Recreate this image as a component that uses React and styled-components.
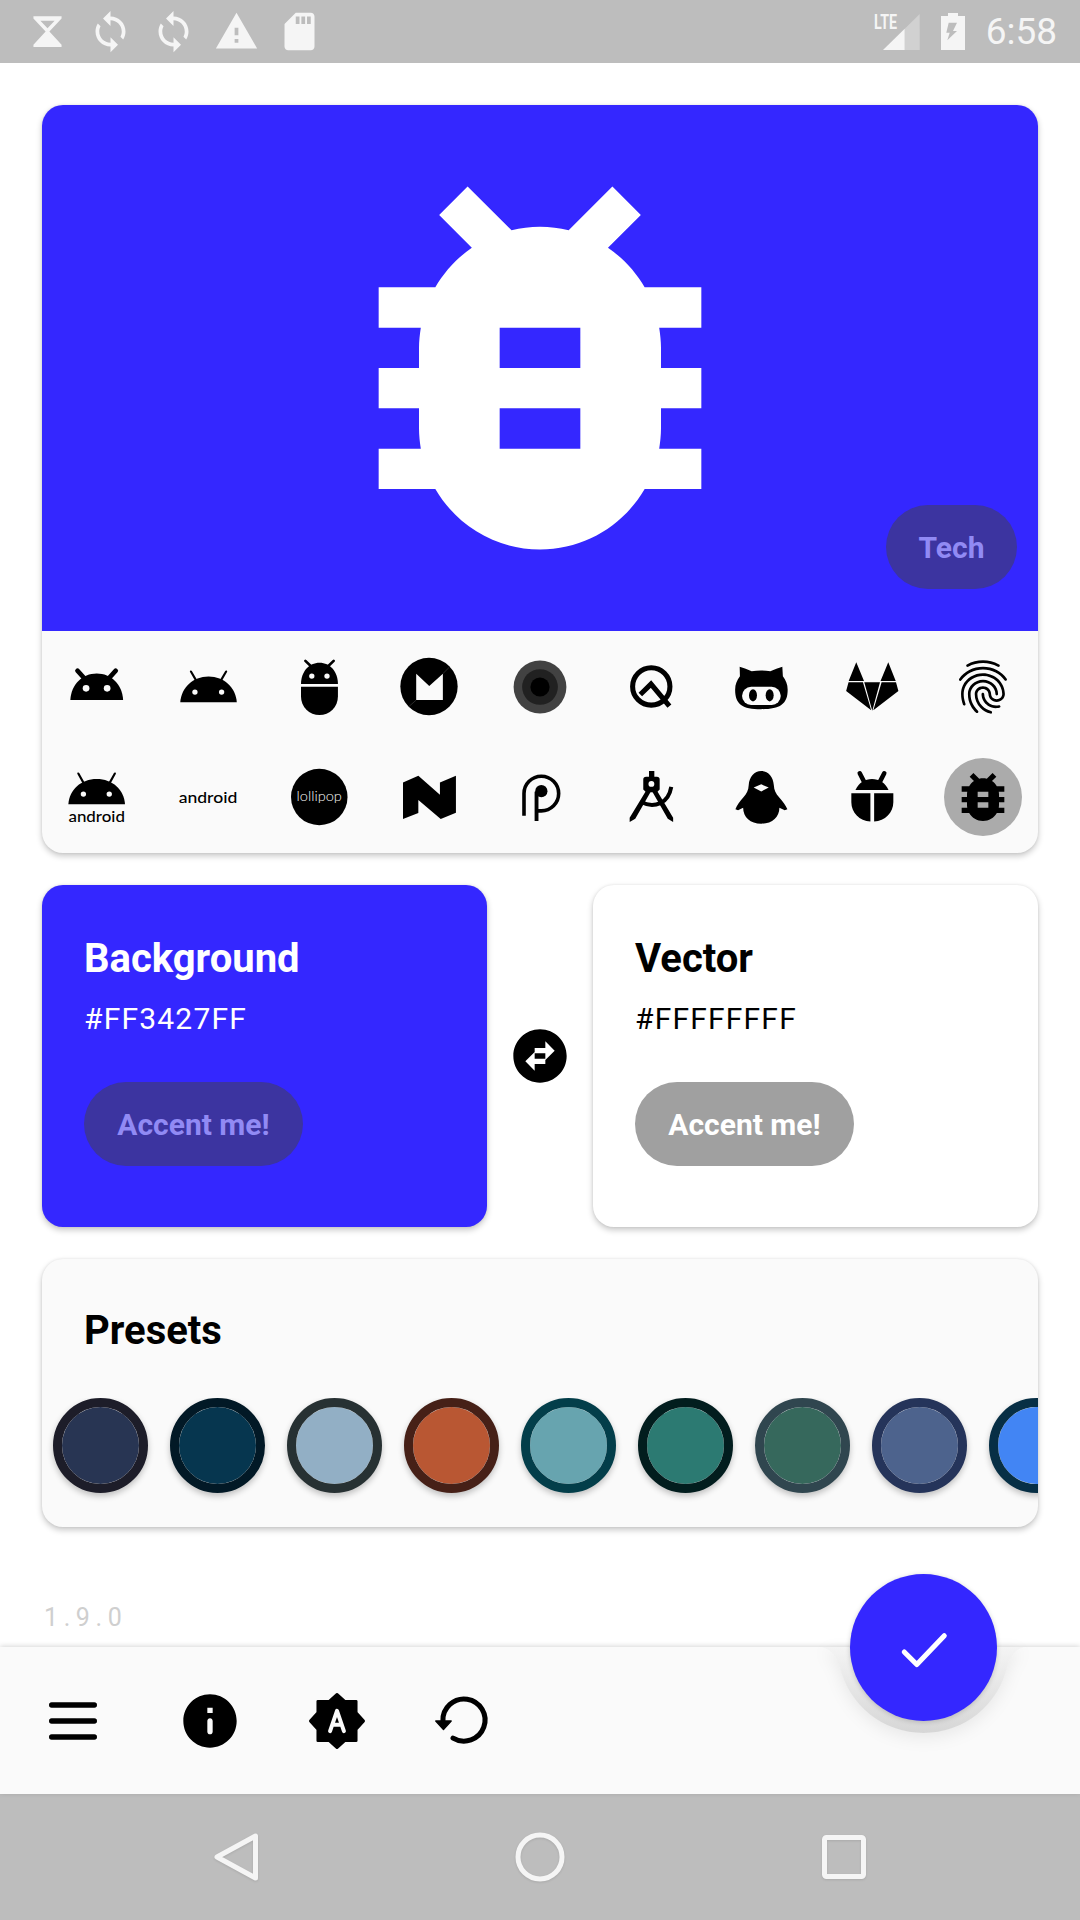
import React from 'react'
import styled, { createGlobalStyle } from 'styled-components'

const blue = '#3427FF'
const muted = '#3C34A0'
const mutedText = '#918AF4'
const tray = '#FAFAFA'
const bars = '#BDBDBD'

const GlobalStyle = createGlobalStyle`
  html, body {
    margin: 0;
    padding: 0;
    background: #fff;
  }
  body {
    font-family: Roboto, "Liberation Sans", sans-serif;
    overflow: hidden;
  }
`

const Screen = styled.div`
  width: 1080px;
  height: 1920px;
  display: flex;
  flex-direction: column;
  overflow: hidden;
`

const StatusBar = styled.div`
  flex: 0 0 63px;
  display: flex;
  align-items: center;
  padding: 0 23px 0 25px;
  background: ${bars};
  color: #f5f5f5;
`

const StatusLeft = styled.div`
  display: flex;
  gap: 18px;
`

const StatusRight = styled.div`
  display: flex;
  align-items: center;
  margin-left: auto;
`

const Clock = styled.span`
  font-size: 37px;
  margin-left: 21px;
  line-height: 63px;
`

const Content = styled.main`
  flex: 1;
  display: flex;
  flex-direction: column;
  gap: 32px;
  padding: 42px 42px 0;
`

const Card = styled.section`
  border-radius: 21px;
  background: ${(p) => p.$bg || '#fff'};
  box-shadow: 0 3px 6px rgba(0, 0, 0, 0.22), 0 0 3px rgba(0, 0, 0, 0.08);
`

const HeroCard = styled(Card)`
  overflow: hidden;
  background: ${tray};
`

const Preview = styled.div`
  position: relative;
  height: 526px;
  display: flex;
  align-items: center;
  justify-content: center;
  background: ${blue};
  color: #fff;
`

const Pill = styled.div`
  height: 84px;
  width: ${(p) => p.$width}px;
  border-radius: 42px;
  display: flex;
  align-items: center;
  justify-content: center;
  font-size: 30px;
  font-weight: 700;
  background: ${(p) => p.$bg};
  color: ${(p) => p.$fg};
`

const TechPill = styled(Pill)`
  position: absolute;
  right: 21px;
  bottom: 42px;
`

const IconGrid = styled.div`
  display: grid;
  grid-template-columns: repeat(9, 1fr);
  grid-auto-rows: 110px;
  padding: 1px 0 1px;
`

const IconCell = styled.div`
  display: flex;
  align-items: center;
  justify-content: center;
`

const IconSlot = styled.div`
  width: 78px;
  height: 78px;
  border-radius: 50%;
  display: flex;
  align-items: center;
  justify-content: center;
  background: ${(p) => (p.$selected ? '#ABABAB' : 'transparent')};
`

const Glyph = styled.svg`
  width: ${(p) => p.$size || 64}px;
  height: ${(p) => p.$size || 64}px;
  flex: none;
  display: block;
  fill: currentColor;
`

const ColorRow = styled.div`
  display: flex;
  align-items: center;
  height: 342px;
`

const ColorCard = styled(Card)`
  flex: 0 0 445px;
  height: 342px;
  box-sizing: border-box;
  padding: 51px 42px 0;
  color: ${(p) => p.$fg};
`

const SwapSlot = styled.div`
  flex: 1;
  display: flex;
  justify-content: center;
  color: #000;
`

const CardTitle = styled.h2`
  margin: 0;
  font-size: 40px;
  line-height: 46px;
  font-weight: 700;
`

const HexValue = styled.div`
  margin-top: 19px;
  font-size: 30px;
  line-height: 36px;
  letter-spacing: 1.2px;
  margin-bottom: 45px;
`

const PresetCard = styled(Card)`
  height: 268px;
  background: ${tray};
  overflow: hidden;
`

const PresetTitle = styled(CardTitle)`
  padding: 49px 42px 0;
`

const Swatches = styled.div`
  display: flex;
  gap: 22px;
  margin-top: 44px;
  padding: 0 0 12px 11px;
  overflow: hidden;
`

const Swatch = styled.div`
  flex: none;
  width: 77px;
  height: 77px;
  border-radius: 50%;
  border: 9px solid ${(p) => p.$ring};
  background: ${(p) => p.$fill};
  background-clip: padding-box;
  box-shadow: 0 3px 6px rgba(0, 0, 0, 0.24);
`

const Version = styled.div`
  margin-top: 55px;
  margin-left: 2px;
  font-size: 25px;
  line-height: 30px;
  letter-spacing: 5.6px;
  color: #cfcfcf;
`

const BottomBar = styled.nav`
  position: relative;
  z-index: 1;
  flex: 0 0 147px;
  display: flex;
  align-items: center;
  padding-left: 41px;
  gap: 63px;
  background: ${tray};
  color: #000;
  box-shadow: 0 -1px 5px rgba(0, 0, 0, 0.16);
`

const MenuSlot = styled.div`
  margin-right: 10px;
  display: flex;
`

const Notch = styled.svg`
  position: absolute;
  left: 808px;
  top: 0;
  width: 231px;
  height: 100px;
  overflow: visible;
  filter: drop-shadow(0 5px 8px rgba(0, 0, 0, 0.07));
`

const Fab = styled.div`
  position: absolute;
  left: 850px;
  top: -73px;
  width: 147px;
  height: 147px;
  border-radius: 50%;
  display: flex;
  align-items: center;
  justify-content: center;
  background: ${blue};
  box-shadow: 0 1px 5px rgba(0, 0, 0, 0.18);
`

const NavBar = styled.div`
  flex: 0 0 126px;
  display: flex;
  justify-content: center;
  align-items: center;
  background: ${bars};
  color: #f5f5f5;
`

const NavButton = styled.div`
  width: 304px;
  display: flex;
  justify-content: center;
`

const Outline = styled.svg`
  width: 64px;
  height: 64px;
  fill: none;
  stroke: currentColor;
  stroke-width: 5;
  stroke-linejoin: round;
  filter: drop-shadow(0 1px 1px rgba(0, 0, 0, 0.1));
`

const bugPath =
  'M20 8h-2.81c-.45-.78-1.07-1.45-1.82-1.96L17 4.41 15.59 3l-2.17 2.17C12.96 5.06 12.49 5 12 5c-.49 0-.96.06-1.41.17L8.41 3 7 4.41l1.62 1.63C7.88 6.55 7.26 7.22 6.81 8H4v2h2.09c-.05.33-.09.66-.09 1v1H4v2h2v1c0 .34.04.67.09 1H4v2h2.81c1.04 1.79 2.97 3 5.19 3s4.15-1.21 5.19-3H20v-2h-2.09c.05-.33.09-.66.09-1v-1h2v-2h-2v-1c0-.34-.04-.67-.09-1H20V8zm-6 8h-4v-2h4v2zm0-4h-4v-2h4v2z'

const fingerprintPath =
  'M17.81 4.47c-.08 0-.16-.02-.23-.06C15.66 3.42 14 3 12.01 3c-1.98 0-3.86.47-5.57 1.41-.24.13-.54.04-.68-.2-.13-.24-.04-.55.2-.68C7.82 2.52 9.86 2 12.01 2c2.13 0 3.99.47 6.03 1.52.25.13.34.43.21.67-.09.18-.26.28-.44.28zM3.5 9.72c-.1 0-.2-.03-.29-.09-.23-.16-.28-.47-.12-.7.99-1.4 2.25-2.5 3.75-3.27C9.98 4.04 14 4.03 17.15 5.65c1.5.77 2.76 1.86 3.75 3.25.16.22.11.54-.12.7-.23.16-.54.11-.7-.12-.9-1.26-2.04-2.25-3.39-2.94-2.87-1.47-6.54-1.47-9.4.01-1.36.7-2.5 1.7-3.4 2.96-.08.14-.23.21-.39.21zm6.25 12.07c-.13 0-.26-.05-.35-.15-.87-.87-1.34-1.43-2.01-2.64-.69-1.23-1.05-2.73-1.05-4.34 0-2.97 2.54-5.39 5.66-5.39s5.66 2.42 5.66 5.39c0 .28-.22.5-.5.5s-.5-.22-.5-.5c0-2.42-2.09-4.39-4.66-4.39s-4.66 1.97-4.66 4.39c0 1.44.32 2.77.93 3.85.64 1.15 1.08 1.64 1.85 2.42.19.2.19.51 0 .71-.11.1-.24.15-.37.15zm7.17-1.85c-1.19 0-2.24-.3-3.1-.89-1.49-1.01-2.38-2.65-2.38-4.39 0-.28.22-.5.5-.5s.5.22.5.5c0 1.41.72 2.74 1.94 3.56.71.48 1.54.71 2.54.71.24 0 .64-.03 1.04-.1.27-.05.53.13.58.41.05.27-.13.53-.41.58-.57.11-1.07.12-1.21.12zM14.91 22c-.04 0-.09-.01-.13-.02-1.59-.44-2.63-1.03-3.72-2.1-1.4-1.39-2.17-3.24-2.17-5.22 0-1.62 1.38-2.94 3.08-2.94s3.08 1.32 3.08 2.94c0 1.07.93 1.94 2.08 1.94s2.08-.87 2.08-1.94c0-3.77-3.25-6.83-7.25-6.83-2.84 0-5.44 1.58-6.61 4.03-.39.81-.59 1.76-.59 2.8 0 .78.07 2.01.67 3.61.1.26-.03.55-.29.64-.26.1-.55-.04-.64-.29-.49-1.31-.73-2.61-.73-3.96 0-1.2.23-2.29.68-3.24 1.33-2.79 4.28-4.6 7.51-4.6 4.55 0 8.25 3.51 8.25 7.83 0 1.62-1.38 2.94-3.08 2.94s-3.08-1.32-3.08-2.94c0-1.07-.93-1.94-2.08-1.94s-2.08.87-2.08 1.94c0 1.71.66 3.31 1.87 4.51.95.94 1.86 1.46 3.27 1.85.27.07.42.35.35.61-.05.23-.26.38-.47.38z'

const Icon = ({ size, children }) => (
  <Glyph $size={size} viewBox="0 0 24 24">
    {children}
  </Glyph>
)

const BugIcon = ({ size }) => (
  <Icon size={size}>
    <path d={bugPath} />
  </Icon>
)

const line = { fill: 'none', stroke: 'currentColor', strokeLinecap: 'round' }
const wordmark = { fontFamily: 'Lato, Roboto, sans-serif', fontWeight: 500 }

const AndroidRound = () => (
  <Icon>
    <path d="M2 16.9C2.3 11 6.5 6.9 11.9 6.9S21.5 11 21.8 16.9Z" />
    <path d="M4.7 5.9 7.4 8.9M19 5.9 16.3 8.9" {...line} strokeWidth="1.8" />
    <circle cx="7.9" cy="12.5" r="1.25" fill={tray} />
    <circle cx="15.8" cy="12.5" r="1.25" fill={tray} />
  </Icon>
)

const AndroidThin = () => (
  <Icon>
    <path d="M1.6 17.75C2 12.3 6.3 8.1 12.2 8.1S22.4 12.3 22.8 17.75Z" />
    <path d="M5.6 6.2 7.6 9.6M18.8 6.2 16.8 9.6" {...line} strokeWidth=".8" />
    <circle cx="7.1" cy="13.9" r="1" fill={tray} />
    <circle cx="17.1" cy="13.9" r="1" fill={tray} />
  </Icon>
)

const AndroidCapsule = () => (
  <Icon>
    <path d="M5.25 10.9C5.25 6.3 8.2 2.9 12.2 2.9s6.9 3.4 6.9 8Z" />
    <path d="M6.9 2.2 9 4.2M17.5 2.2 15.4 4.2" {...line} strokeWidth="1" />
    <circle cx="9.3" cy="7.9" r="1" fill={tray} />
    <circle cx="15" cy="7.9" r="1" fill={tray} />
    <path d="M5.25 11.9H19.1V15.6A6.9 6.9 0 0 1 5.25 15.6Z" />
  </Icon>
)

const MarshmallowIcon = () => (
  <Icon>
    <circle cx="12" cy="11.8" r="10.75" />
    <path d="M7.2 7 12.1 11.6 17.2 7V16.9H7.2Z" fill={tray} />
    <path d="M4.6 19.2 7.2 16.9M17.2 7 19.6 4.6" stroke="#8a8a8a" strokeWidth=".12" />
  </Icon>
)

const DarkRings = () => (
  <Icon>
    <circle cx="12" cy="12" r="9.9" fill="#424242" />
    <circle cx="12" cy="12" r="6.7" fill="#212121" />
    <circle cx="12" cy="12" r="3.6" fill="#000" />
  </Icon>
)

const QIcon = () => (
  <Icon>
    <circle cx="12.1" cy="11.8" r="7" fill="none" stroke="currentColor" strokeWidth="1.9" />
    <path d="M8 14.8 12 10.9 18.9 19.2" fill="none" stroke="currentColor" strokeWidth="1.9" />
  </Icon>
)

const OctoIcon = () => (
  <Icon>
    <path d="M4 4.4C5.5 4.8 7 5.4 8.5 6.1 10.8 5.7 13.2 5.7 15.5 6.1 17 5.4 18.6 4.8 20 4.4L20.2 8C21.3 9.5 22 11 22 13 22 18.5 19 20.3 12 20.3S2.3 18.5 2.3 13C2.3 11 3 9.5 4.1 8Z" />
    <rect x="4.9" y="11.9" width="14.5" height="6.85" rx="3.4" fill={tray} />
    <ellipse cx="9" cy="15.1" rx="1.5" ry="2.3" />
    <ellipse cx="15.25" cy="15.1" rx="1.5" ry="2.3" />
  </Icon>
)

const FoxIcon = () => (
  <Icon>
    <path d="M6.1 2.75 3.25 9.75H9ZM18.1 2.75 15.2 9.75H20.9ZM9.1 10.2H15L12.1 20.9ZM3.2 10.2H8.6L11.7 20.7 2.3 13.5ZM21 10.2H15.6L12.5 20.7 21.9 13.5Z" />
  </Icon>
)

const FingerprintIcon = () => (
  <Icon>
    <path d={fingerprintPath} />
  </Icon>
)

const AndroidWord = () => (
  <Icon>
    <path d="M1.25 14.75C1.6 9.3 6 5.25 11.9 5.25S22.2 9.3 22.5 14.75Z" />
    <path d="M5 3.2 7 6.8M18.7 3.2 16.7 6.8" {...line} strokeWidth=".8" />
    <circle cx="6.9" cy="10.9" r="1" fill={tray} />
    <circle cx="16.6" cy="10.9" r="1" fill={tray} />
    <text x="11.9" y="21.2" fontSize="5.8" textAnchor="middle" textLength="21.2" lengthAdjust="spacingAndGlyphs" style={wordmark}>
      android
    </text>
  </Icon>
)

const WordOnly = () => (
  <Icon>
    <text x="12" y="14.4" fontSize="5.8" textAnchor="middle" textLength="22" lengthAdjust="spacingAndGlyphs" style={wordmark}>
      android
    </text>
  </Icon>
)

const LollipopIcon = () => (
  <Icon>
    <circle cx="12.1" cy="12" r="10.6" />
    <text x="12.1" y="13.5" fontSize="5.2" fill={tray} textAnchor="middle" textLength="17" lengthAdjust="spacingAndGlyphs" style={{ fontFamily: 'Lato, Roboto, sans-serif', fontWeight: 300 }}>
      lollipop
    </text>
  </Icon>
)

const NougatIcon = () => (
  <Icon>
    <path d="M2.25 6.6 8 4 16.1 11.2V6.6L22.1 4V17.9L16.4 20.25 8 13.1V18L2.25 20.25Z" />
  </Icon>
)

const PieIcon = () => (
  <Icon>
    <path d="M6 19V10.7A6.5 6.5 0 1 1 12.5 17.2H10.7" fill="none" stroke="currentColor" strokeWidth="1.35" />
    <path d="M10.7 21V10" fill="none" stroke="currentColor" strokeWidth="1.45" />
    <circle cx="12.5" cy="9.8" r="2.3" />
  </Icon>
)

const CompassIcon = () => (
  <Icon>
    <path d="M11.25 2.25H13.25V4.4H14.2Q15.25 4.4 15.25 5.4V9.2L14.2 10.2H10.2L9.1 9.2V5.4Q9.1 4.4 10.2 4.4H11.25Z" />
    <circle cx="12.15" cy="7.1" r="1.1" fill={tray} />
    <path d="M10.2 9.6 12 9.8 6.1 20.2 4 21.4 4 19.8ZM14.2 9.6 12.4 9.8 18.3 20.2 20.3 21.4 20.3 19.8Z" />
    <path d="M8.3 13.9Q12 15.8 15.5 14.3 18.8 12.8 19.6 8.2" fill="none" stroke="currentColor" strokeWidth="1.5" />
  </Icon>
)

const PenguinIcon = () => (
  <Icon>
    <path d="M12.1 2.25C9.5 2.25 7.6 4.5 7.4 7.5 7.3 9.5 6.6 10.8 5.5 12 4 13.6 3 15.2 2.4 16.6L3.4 17 5.3 16C5.3 19.5 8 22 12.1 22S18.9 19.5 18.9 16L20.9 17 21.9 16.6C21.2 15.2 20.2 13.6 18.7 12 17.6 10.8 16.9 9.5 16.8 7.5 16.6 4.5 14.7 2.25 12.1 2.25Z" />
    <path d="M9.25 8.4 12.1 7.25 14.9 8.4 12.1 9.9Z" fill={tray} />
  </Icon>
)

const BeetleIcon = () => (
  <Icon>
    <path d="M5.8 9.4C7 6.6 9.4 5.25 12 5.25S17 6.6 18.2 9.4Z" />
    <path d="M7.4 3.1 9.2 6.6M16.6 3.1 14.8 6.6" {...line} strokeWidth="1.7" />
    <path d="M4.25 10.6H11.4V21.2C7.3 21 4.25 17.9 4.25 14ZM20 10.6H12.8V21.2C16.9 21 20 17.9 20 14Z" />
  </Icon>
)

const HourglassIcon = () => (
  <Glyph $size={45} viewBox="0 0 24 24">
    <path
      fillRule="evenodd"
      d="M4.5 3.8H19.5V5L13 12 19.5 19V20.2H4.5V19L11 12 4.5 5ZM8.2 6.2H15.8L12 10.3Z"
    />
  </Glyph>
)

const SyncIcon = () => (
  <Glyph $size={45} viewBox="0 0 24 24">
    <path d="M12 4V1L8 5l4 4V6c3.31 0 6 2.69 6 6 0 1.01-.25 1.97-.7 2.8l1.46 1.46C19.54 15.03 20 13.57 20 12c0-4.42-3.58-8-8-8zm0 14c-3.31 0-6-2.69-6-6 0-1.01.25-1.97.7-2.8L5.24 7.74C4.46 8.97 4 10.43 4 12c0 4.42 3.58 8 8 8v3l4-4-4-4v3z" />
  </Glyph>
)

const WarningIcon = () => (
  <Glyph $size={45} viewBox="0 0 24 24">
    <path d="M1 21h22L12 2 1 21zm12-3h-2v-2h2v2zm0-4h-2v-4h2v4z" />
  </Glyph>
)

const SdIcon = () => (
  <Glyph $size={45} viewBox="0 0 24 24">
    <path d="M18 2h-8L4.02 8 4 20c0 1.1.9 2 2 2h12c1.1 0 2-.9 2-2V4c0-1.1-.9-2-2-2zm-6 6h-2V4h2v4zm3 0h-2V4h2v4zm3 0h-2V4h2v4z" />
  </Glyph>
)

const SignalIcon = styled.svg`
  width: 46px;
  height: 40px;
  fill: currentColor;
`

const Signal = () => (
  <SignalIcon viewBox="0 0 46 40">
    <path d="M9 38 30.7 16.7V38Z" />
    <path d="M30.7 16.7 45.7 2V38H30.7Z" opacity=".35" />
    <text x="0" y="17" fontSize="20" fontWeight="700" textLength="23" lengthAdjust="spacingAndGlyphs" fontFamily="Roboto, sans-serif">
      LTE
    </text>
  </SignalIcon>
)

const BatteryIcon = styled.svg`
  width: 24px;
  height: 37px;
  margin-left: 21px;
  fill: currentColor;
`

const Battery = () => (
  <BatteryIcon viewBox="0 0 24 37">
    <path
      fillRule="evenodd"
      d="M7 0H17V3H24V37H0V3H7ZM7.7 9.7H16L12 18H16L6.3 27.3 8.7 19.7H5.3Z"
    />
  </BatteryIcon>
)

const MenuIcon = () => (
  <Icon>
    <path d="M4 6h16M4 12h16M4 18h16" {...line} strokeWidth="2" />
  </Icon>
)

const InfoIcon = () => (
  <Icon>
    <path d="M12 2C6.48 2 2 6.48 2 12s4.48 10 10 10 10-4.48 10-10S17.52 2 12 2zm0 15c-.55 0-1-.45-1-1v-4c0-.55.45-1 1-1s1 .45 1 1v4c0 .55-.45 1-1 1zm1-8h-2V7h2v2z" />
  </Icon>
)

const AutoBadgeIcon = () => (
  <Icon>
    <path
      d="M12 2 14.9 4.6H19.2V8.9L22 12 19.2 15.1V19.4H14.9L12 22 9.1 19.4H4.8V15.1L2 12 4.8 8.9V4.6H9.1Z"
      stroke="currentColor"
      strokeWidth="1"
      strokeLinejoin="round"
    />
    <path d="M9.4 15.8 12 8.2 14.6 15.8M10.3 13.4H13.7" {...line} stroke={tray} strokeWidth="1.5" strokeLinejoin="round" />
  </Icon>
)

const RestoreIcon = () => (
  <Icon>
    <path d="M4.1 12A7.9 7.9 0 1 1 7.9 18.4" {...line} strokeWidth="1.9" />
    <path d="M1.4 12H7.2L4.3 15.2Z" stroke="currentColor" strokeWidth=".5" strokeLinejoin="round" />
  </Icon>
)

const SwapIcon = () => (
  <Icon>
    <path d="M12 2C6.48 2 2 6.48 2 12s4.48 10 10 10 10-4.48 10-10S17.52 2 12 2zm2 4.5l3.5 3.5-3.5 3.5V11h-4V9h4V6.5zm-4 11L6.5 14l3.5-3.5V13h4v2h-4v2.5z" />
  </Icon>
)

const iconRows = [
  AndroidRound,
  AndroidThin,
  AndroidCapsule,
  MarshmallowIcon,
  DarkRings,
  QIcon,
  OctoIcon,
  FoxIcon,
  FingerprintIcon,
  AndroidWord,
  WordOnly,
  LollipopIcon,
  NougatIcon,
  PieIcon,
  CompassIcon,
  PenguinIcon,
  BeetleIcon,
  BugIcon,
]

const presets = [
  ['#1D1D29', '#283553'],
  ['#021926', '#06364F'],
  ['#273133', '#92AFC5'],
  ['#462017', '#B95733'],
  ['#033E4A', '#67A4AF'],
  ['#021D1E', '#2C7A72'],
  ['#30464F', '#36685C'],
  ['#25345A', '#4D638D'],
  ['#072F45', '#4285F4'],
]

export default function App() {
  return (
    <Screen>
      <GlobalStyle />
      <StatusBar>
        <StatusLeft>
          <HourglassIcon />
          <SyncIcon />
          <SyncIcon />
          <WarningIcon />
          <SdIcon />
        </StatusLeft>
        <StatusRight>
          <Signal />
          <Battery />
          <Clock>6:58</Clock>
        </StatusRight>
      </StatusBar>

      <Content>
        <HeroCard>
          <Preview>
            <BugIcon size={484} />
            <TechPill $width={131} $bg={muted} $fg={mutedText}>
              Tech
            </TechPill>
          </Preview>
          <IconGrid>
            {iconRows.map((Item, i) => (
              <IconCell key={i}>
                <IconSlot $selected={i === iconRows.length - 1}>
                  <Item />
                </IconSlot>
              </IconCell>
            ))}
          </IconGrid>
        </HeroCard>

        <ColorRow>
          <ColorCard $bg={blue} $fg="#fff">
            <CardTitle>Background</CardTitle>
            <HexValue>#FF3427FF</HexValue>
            <Pill $width={219} $bg={muted} $fg={mutedText}>
              Accent me!
            </Pill>
          </ColorCard>
          <SwapSlot>
            <SwapIcon />
          </SwapSlot>
          <ColorCard $bg="#fff" $fg="#000">
            <CardTitle>Vector</CardTitle>
            <HexValue>#FFFFFFFF</HexValue>
            <Pill $width={219} $bg="#A0A0A0" $fg="#fff">
              Accent me!
            </Pill>
          </ColorCard>
        </ColorRow>

        <PresetCard>
          <PresetTitle>Presets</PresetTitle>
          <Swatches>
            {presets.map(([ring, fill]) => (
              <Swatch key={ring} $ring={ring} $fill={fill} />
            ))}
          </Swatches>
        </PresetCard>
      </Content>

      <VersionWrap>
        <Version>1.9.0</Version>
      </VersionWrap>

      <BottomBar>
        <MenuSlot>
          <MenuIcon />
        </MenuSlot>
        <InfoIcon />
        <AutoBadgeIcon />
        <RestoreIcon />
        <Notch viewBox="0 0 231 100">
          <defs>
            <linearGradient id="notchFill" x1="0" y1="0" x2="0" y2="1">
              <stop offset="0" stopColor="#f4f4f4" />
              <stop offset="1" stopColor="#d6d6d6" />
            </linearGradient>
          </defs>
          <path
            d="M11 0C20 0 28 8 31.4 18A86 86 0 0 0 199.6 18C203 8 210 0 218 0Z"
            fill="url(#notchFill)"
          />
        </Notch>
        <Fab>
          <Glyph $size={64} viewBox="0 0 24 24">
            <path d="M4.6 13.5 9.3 18.2 19.6 7.4" {...line} stroke="#fff" strokeWidth="1.9" strokeLinejoin="round" />
          </Glyph>
        </Fab>
      </BottomBar>

      <NavBar>
        <NavButton>
          <Outline viewBox="0 0 64 64">
            <path d="M13 32 51.5 11V53Z" />
          </Outline>
        </NavButton>
        <NavButton>
          <Outline viewBox="0 0 64 64">
            <circle cx="32" cy="32" r="22" />
          </Outline>
        </NavButton>
        <NavButton>
          <Outline viewBox="0 0 64 64">
            <rect x="12.5" y="12.5" width="39" height="39" rx="2" />
          </Outline>
        </NavButton>
      </NavBar>
    </Screen>
  )
}

const VersionWrap = styled.div`
  padding: 0 42px 14px;
  margin-top: -44px;
`
